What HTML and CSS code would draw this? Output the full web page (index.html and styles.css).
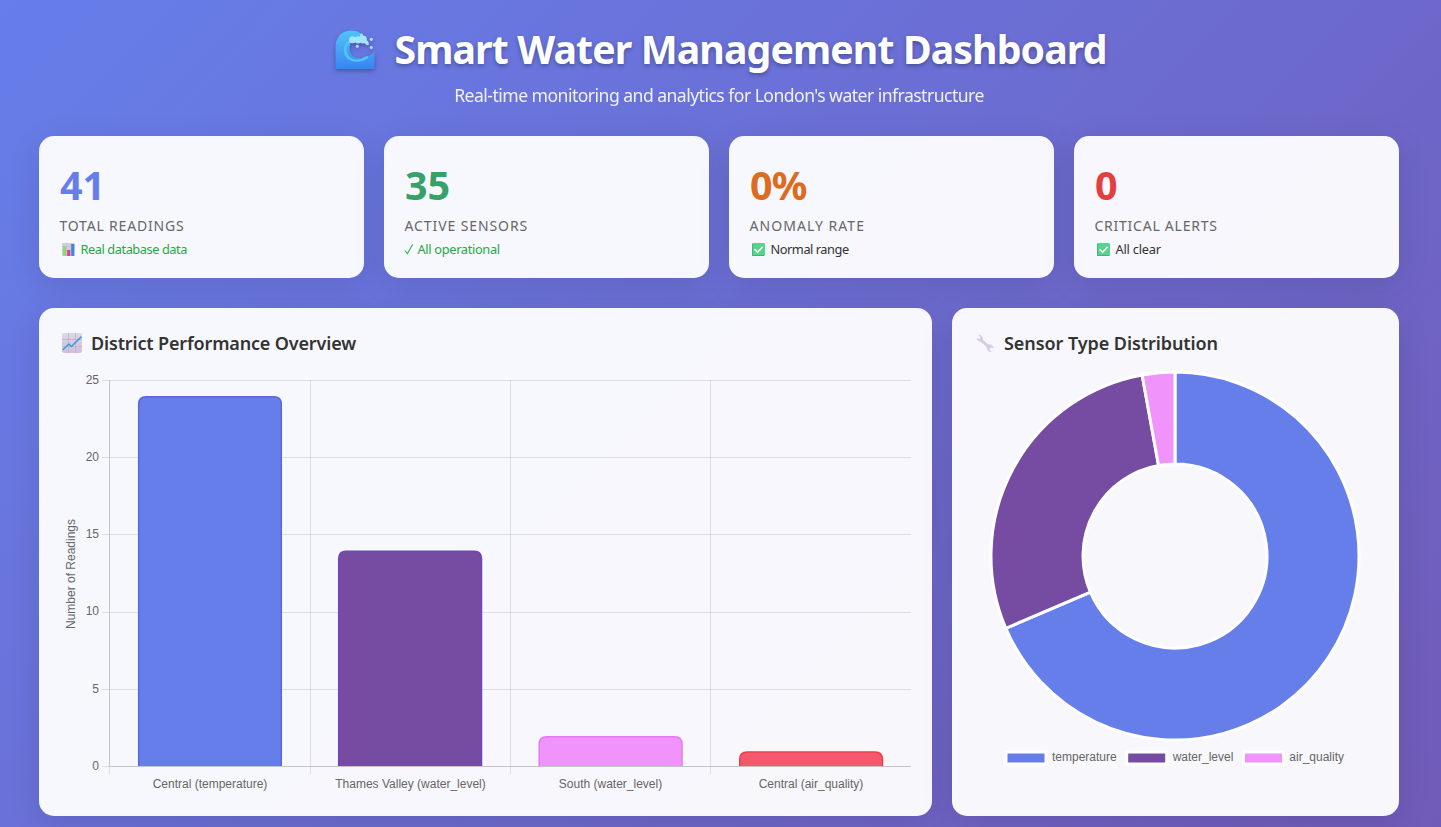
FILE: index.html
```html
<!DOCTYPE html>
<html lang="en">
<head>
<meta charset="utf-8">
<title>Smart Water Management Dashboard</title>
<link rel="stylesheet" href="styles.css">
</head>
<body>
<svg class="defs" width="0" height="0" aria-hidden="true">
  <defs>
    <linearGradient id="wave" x1="0" y1="0" x2="0" y2="1"><stop offset="0" stop-color="#4fc5fa"/><stop offset="1" stop-color="#3b82f2"/></linearGradient>
    <linearGradient id="paper" x1="0" y1="0" x2="0" y2="1"><stop offset="0" stop-color="#dcd8e4"/><stop offset="1" stop-color="#d0bfdf"/></linearGradient>
    <symbol id="check" viewBox="0 0 13 13">
      <rect width="13" height="13" rx="1.2" fill="#55d58c"/>
      <path d="M.4 1v11.5H12" fill="none" stroke="#45a377" stroke-width=".8"/>
      <path d="M3 6.600l2.600 2.700 4.600-5" fill="none" stroke="#fff" stroke-width="1.600" stroke-linecap="round" stroke-linejoin="round"/>
    </symbol>
  </defs>
</svg>
<div class="container">
  <header class="header">
    <h1 class="title">
      <svg class="title-icon" viewBox="0 0 40 40">
        <path d="M.5 39V17C.5 7 7 .5 16.500 .5c6 0 11 3 13 8L17 11c-3.500 5-3 12 1 15 6 4 14 2.500 21.500-4V39z" fill="url(#wave)"/>
        <path d="M16 10.500C8.500 15 8.500 24 14.500 28.500 20 32 27 30.500 32 27.300" fill="none" stroke="#4fc6fb" stroke-width="2.600" stroke-linecap="round"/>
        <g fill="#a5e5fb"><circle cx="17.500" cy="9.800" r="3.500"/><circle cx="23" cy="9.800" r="3.600"/><circle cx="28" cy="9.500" r="3.900"/><circle cx="31.500" cy="12.500" r="2"/><circle cx="26.500" cy="5" r="1.400"/><circle cx="36.300" cy="9.300" r="1.600"/><circle cx="36.300" cy="17.500" r="1.600"/><circle cx="32.500" cy="14" r="1.300"/><circle cx="22.300" cy="16.300" r="1.500"/></g>
      </svg>
      <span class="title-text">Smart Water Management Dashboard</span>
    </h1>
    <p class="subtitle">Real-time monitoring and analytics for London's water infrastructure</p>
  </header>

  <section class="stats">
    <article class="card stat">
      <div class="value blue">41</div>
      <div class="label label-a">Total Readings</div>
      <div class="note good">
        <svg class="note-icon" viewBox="0 0 13 13"><rect width="13" height="13" rx="1.200" fill="#d5cedd"/><path d="M0 3.500h13M0 7h13M4.500 0v13M9 0v13" stroke="#bcb1c9" stroke-width=".5"/><path d="M1 3h3v10H1z" fill="#8fdc6c"/><path d="M5.200 7h3v6h-3z" fill="#df3c8e"/><path d="M9.200 1h3v12h-3z" fill="#3b88d6"/></svg>
        <span class="note-a">Real database data</span>
      </div>
    </article>
    <article class="card stat">
      <div class="value green">35</div>
      <div class="label label-b">Active Sensors</div>
      <div class="note good">
        <svg class="tick" viewBox="0 0 10 12"><path d="M.8 7.500l2.600 3L8.800 1.200" fill="none" stroke="#35b058" stroke-width="1.100"/></svg>
        <span class="note-b">All operational</span>
      </div>
    </article>
    <article class="card stat">
      <div class="value orange">0%</div>
      <div class="label label-c">Anomaly Rate</div>
      <div class="note"><svg class="note-icon"><use href="#check"/></svg><span class="note-c">Normal range</span></div>
    </article>
    <article class="card stat">
      <div class="value red">0</div>
      <div class="label label-d">Critical Alerts</div>
      <div class="note"><svg class="note-icon"><use href="#check"/></svg><span class="note-d">All clear</span></div>
    </article>
  </section>

  <section class="charts">
    <article class="card panel">
      <h2 class="panel-title">
        <svg class="panel-icon" viewBox="0 0 20 20"><rect width="20" height="20" rx="2" fill="url(#paper)"/><path d="M0 6.500h20M0 13.500h20M6.500 0v20M13.500 0v20" stroke="#b9aec8" stroke-width=".7"/><path d="M.8 17l6-6 2.700 2.500L19.500 3.500" fill="none" stroke="#3b9bd8" stroke-width="1.500"/></svg>
        <span class="panel-a">District Performance Overview</span>
      </h2>
      <svg class="chart" viewBox="59 366 853 430" width="853" height="430">
        <g class="grid">
          <path d="M102 380.500H911M102 457.500H911M102 534.500H911M102 612.500H911M102 689.500H911M102 766.500H110"/>
          <path d="M109.500 767V774M310.500 380V774M510.500 380V774M710.500 380V774"/>
        </g>
        <g class="bars">
          <path d="M138.700 766V404.200q0-7.500 7.500-7.500H273.800q7.500 0 7.500 7.500V766" fill="#667eea" stroke="#5a67d8"/>
          <path d="M338.700 766V558.700q0-7.500 7.500-7.500H474q7.500 0 7.500 7.500V766" fill="#764ba2" stroke="#6b46c1"/>
          <path d="M539.200 766V744.200q0-7.500 7.500-7.500H674.500q7.500 0 7.500 7.500V766" fill="#f093fb" stroke="#e679f3"/>
          <path d="M739.700 766V759.400q0-7.500 7.500-7.500H875q7.500 0 7.500 7.500V766" fill="#f5576c" stroke="#ee4049"/>
        </g>
        <path class="axis" d="M109.500 380V767M109 766.500H911"/>
        <g class="ticks end">
          <text x="99" y="384">25</text><text x="99" y="461">20</text><text x="99" y="538">15</text><text x="99" y="615">10</text><text x="99" y="693">5</text><text x="99" y="770">0</text>
        </g>
        <g class="ticks mid">
          <text x="210" y="788">Central (temperature)</text><text x="410.500" y="788">Thames Valley (water_level)</text><text x="610.500" y="788">South (water_level)</text><text x="811" y="788">Central (air_quality)</text>
          <text transform="translate(75 574) rotate(-90)">Number of Readings</text>
        </g>
      </svg>
    </article>
    <article class="card panel">
      <h2 class="panel-title">
        <svg class="panel-icon" viewBox="0 0 20 20"><path d="M5.500 6.500l9 8" stroke="#d5cbe3" stroke-width="3"/><path d="M3.800 2.200L6 4.200 5 6.500 2 5.500A3.200 3.200 0 0 0 7 7.500 3.500 3.500 0 0 0 3.800 2.200zM16 18.500l-2-2 1-2.500 3.200.8A3.300 3.300 0 0 0 13 12.500a3.600 3.600 0 0 0 3 6z" fill="#d3cadf" stroke="#d3cadf" stroke-width=".8"/></svg>
        <span class="panel-b">Sensor Type Distribution</span>
      </h2>
      <svg class="chart" viewBox="972 366 407 430" width="407" height="430">
        <g class="slices" transform="translate(1175 556)">
          <path fill="#667eea" d="M0-184A184 184 0 1 1-169.200 72.310L-84.600 36.160A92 92 0 1 0 0-92z"/>
          <path fill="#764ba2" d="M-169.200 72.310A184 184 0 0 1-32.860-181.040L-16.430-90.520A92 92 0 0 0-84.600 36.160z"/>
          <path fill="#f093fb" d="M-32.860-181.040A184 184 0 0 1 0-184V-92A92 92 0 0 0-16.430-90.520z"/>
        </g>
        <g class="keys">
          <rect x="1006" y="752" width="40" height="12" fill="#667eea"/><rect x="1126.700" y="752" width="40" height="12" fill="#764ba2"/><rect x="1243.500" y="752" width="40" height="12" fill="#f093fb"/>
        </g>
        <g class="ticks"><text x="1052" y="761">temperature</text><text x="1172.700" y="761">water_level</text><text x="1289.300" y="761">air_quality</text></g>
      </svg>
    </article>
  </section>
</div>
</body>
</html>
```
FILE: styles.css
```css
* { box-sizing: border-box; margin: 0; padding: 0; }
body {
  height: 827px;
  overflow: hidden;
  font-family: "Noto Sans", "Open Sans", sans-serif;
  color: #333;
  background: linear-gradient(135deg, #667eea 0%, #764ba2 100%) 0 0 / 1441px 1850px no-repeat;
}
.defs { position: absolute; }
.container { width: 1441px; padding: 20px 42px 0 39px; }
.header { height: 116px; text-align: center; color: #fff; }
.title { display: flex; align-items: center; justify-content: center; height: 60px; font-size: 39.200px; line-height: 58px; white-space: nowrap; padding-left: 4px; }
.title-icon { width: 40px; height: 40px; margin-right: 19px; filter: drop-shadow(0 2px 2px rgba(0,0,0,.3)); overflow: visible; }
.title-text { height: 60px; letter-spacing: -.87px; text-shadow: 0 2px 4px rgba(0,0,0,.3); }
.subtitle { font-size: 17.600px; line-height: 30px; opacity: .9; letter-spacing: -.54px; }
.card { background: rgba(255,255,255,.95); border-radius: 15px; box-shadow: 0 8px 32px rgba(0,0,0,.1); }
.stats { display: grid; grid-template-columns: repeat(4, 1fr); gap: 20px; margin-bottom: 30px; }
.stat { height: 142px; padding: 20px; }
.value { height: 60px; padding-left: 1px; font-size: 39.500px; line-height: 58px; font-weight: 700; }
.orange { letter-spacing: -.8px; }
.blue { color: #667eea; }
.green { color: #38a169; }
.orange { color: #dd6b20; }
.red { color: #e53e3e; }
.label { height: 20px; padding-left: .5px; font-size: 14px; line-height: 20px; color: #666; letter-spacing: 1px; text-transform: uppercase; }
.label-a { letter-spacing: .8px; }
.label-b { letter-spacing: .9px; }
.label-c { letter-spacing: 1.050px; }
.label-d { letter-spacing: .75px; }
.note { display: flex; align-items: center; height: 26px; font-size: 12.800px; line-height: 26px; white-space: nowrap; }
.note-a { letter-spacing: -.44px; }
.note-b { letter-spacing: -.33px; }
.note-c { letter-spacing: -.46px; }
.note-d { letter-spacing: -.2px; }
.good { color: #28a745; }
.note-icon { width: 13px; height: 13px; margin: 0 5.500px 0 3px; }
.tick { width: 10px; height: 12px; margin-right: 3.500px; }
.charts { display: grid; grid-template-columns: 893px 447px; gap: 20px; }
.panel { height: 508px; padding: 20px; }
.panel-title { display: flex; align-items: center; height: 30px; margin-bottom: 8px; font-size: 18px; line-height: 30px; font-weight: 600; white-space: nowrap; }
.panel-a { letter-spacing: -.15px; }
.panel-b { letter-spacing: -.07px; }
.panel-icon { width: 20px; height: 20px; margin: 0 9px 0 3px; }
.chart { display: block; }
.grid { stroke: rgba(0,0,0,.1); }
.axis { fill: none; stroke: #c3c3c9; }
.bars { stroke-width: 1.5; }
.ticks { font-family: "Liberation Sans", Arial, sans-serif; font-size: 12px; fill: #666; }
.end { text-anchor: end; }
.mid { text-anchor: middle; }
.slices { stroke: #fff; stroke-width: 3; }
.keys { stroke: #fff; stroke-width: 3; }
```
